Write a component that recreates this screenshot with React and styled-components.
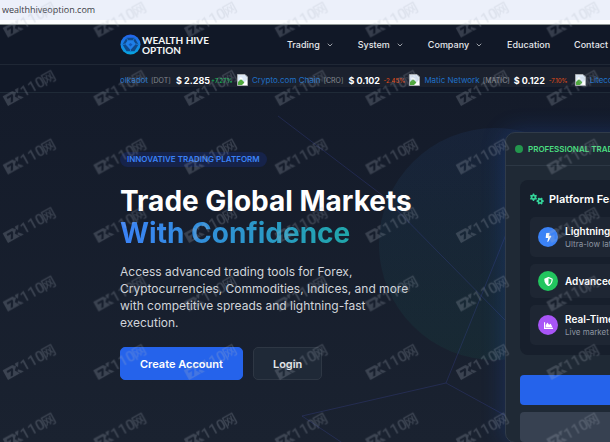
import React from "react";
import styled, { createGlobalStyle, css } from "styled-components";
import { FaBolt, FaChartArea, FaShieldAlt } from "react-icons/fa";
import { FaGears } from "react-icons/fa6";
import { ChevronDown } from "lucide-react";

const GlobalStyle = createGlobalStyle`
  * {
    box-sizing: border-box;
  }

  body {
    margin: 0;
    background: #171f2e;
    color: #fff;
    font-family: Inter, "Liberation Sans", sans-serif;
  }
`;

const Page = styled.div`
  position: relative;
  display: flex;
  flex-direction: column;
  min-height: 100vh;
  overflow: hidden;
`;

const AddressBar = styled.div`
  height: 25px;
  padding-left: 2px;
  background: linear-gradient(#ecf0fa 20px, #fcfdfe 20px);
  border-bottom: 1px solid #8e9693;
  color: #3c4046;
  font-family: "Open Sans", sans-serif;
  font-size: 9px;
  line-height: 20px;
`;

const Header = styled.header`
  height: 40px;
  padding-left: 120px;
  display: flex;
  align-items: center;
  background: #111827;
  border-bottom: 1px solid #1f2735;
`;

const Logo = styled.a`
  width: 167px;
  flex-shrink: 0;
  display: flex;
  align-items: center;
  gap: 1px;
  color: #f4f6f8;
  font-family: Lato, sans-serif;
  font-size: 10px;
  font-weight: 700;
  line-height: 10px;
  text-decoration: none;
`;

const LogoLine = styled.span`
  display: block;
`;

const Menu = styled.nav`
  display: flex;
  align-items: center;
  gap: 24px;
`;

const menuText = css`
  padding: 0;
  border: none;
  background: none;
  color: #e5e7eb;
  font-family: inherit;
  font-size: 9px;
  font-weight: 500;
  line-height: 14px;
  white-space: nowrap;
  cursor: pointer;
`;

const MenuButton = styled.button`
  ${menuText}
  display: flex;
  align-items: center;
  gap: 6px;
`;

const MenuLink = styled.a`
  ${menuText}
  text-decoration: none;
`;

const TickerBar = styled.div`
  height: 28px;
  padding: 2px 0 2px 120px;
  background: #111827;
  border-bottom: 1px solid #1f2a37;
`;

const Ticker = styled.div`
  height: 20px;
  overflow: hidden;
  background: #1b212e;
`;

const Track = styled.div`
  height: 26px;
  display: flex;
  align-items: center;
  gap: 6px;
  width: max-content;
  transform: translateX(-20px);
`;

const Coin = styled.div`
  display: flex;
  align-items: center;
  font-size: 8px;
  white-space: nowrap;
`;

const CoinLink = styled.a`
  margin: 0 3px 0 4px;
  color: #1f70c6;
  text-decoration: none;
`;

const Symbol = styled.span`
  width: ${(props) => props.$width}px;
  color: #858a90;
  font-size: 7px;
`;

const Price = styled.b`
  width: 35px;
  font-size: 9px;
  font-weight: 700;
`;

const Change = styled.span`
  width: 20px;
  color: ${(props) => (props.$up ? "#12b853" : "#dd4a1a")};
  font-size: 6px;
  font-weight: 500;
`;

const Hero = styled.main`
  position: relative;
  flex: 1;
  padding: 39px 0 0 120px;
  display: grid;
  grid-template-columns: 361px 380px;
  gap: 24px;
  align-items: start;
  background: linear-gradient(#141b2a, #1a2230);
`;

const Backdrop = styled.svg`
  position: absolute;
  top: 0;
  left: 0;
`;

const Intro = styled.section`
  position: relative;
  padding-top: 20px;
`;

const Pill = styled.span`
  display: inline-block;
  padding: 0 7px;
  border-radius: 8px;
  background: #16234a;
  color: #3b82f6;
  font-size: 8px;
  font-weight: 600;
  line-height: 15px;
  vertical-align: top;
`;

const Title = styled.h1`
  margin: 13px 0 0;
  font-size: 28px;
  font-weight: 700;
  line-height: 32px;
  white-space: nowrap;
`;

const Accent = styled.span`
  display: block;
  width: max-content;
  background: linear-gradient(90deg, #3b82f6, #20a6aa);
  background-clip: text;
  color: transparent;
`;

const Lead = styled.p`
  max-width: 304px;
  margin: 14px 0 0;
  color: #d1d5db;
  font-size: 12px;
  line-height: 17px;
`;

const Actions = styled.div`
  margin-top: 16px;
  display: flex;
  gap: 10px;
`;

const Button = styled.button`
  height: 33px;
  padding: 0 19px;
  border: 1px solid ${(props) => (props.$primary ? "#2563eb" : "#2e3744")};
  border-radius: 5px;
  background: ${(props) => (props.$primary ? "#2563eb" : "#1f2937")};
  color: ${(props) => (props.$primary ? "#fff" : "#e5e7eb")};
  font-family: inherit;
  font-size: 11px;
  font-weight: 600;
  cursor: pointer;
`;

const Card = styled.section`
  position: relative;
  border: 1px solid #303b49;
  border-radius: 10px;
  background: #1f2935;
  box-shadow: 0 0 25px rgba(37, 99, 235, 0.24);
`;

const CardHeader = styled.div`
  height: 33px;
  padding-left: 9px;
  display: flex;
  align-items: center;
  gap: 5px;
  border-bottom: 1px solid #2c3744;
  color: #4ade80;
  font-size: 8px;
  font-weight: 600;
`;

const Dot = styled.span`
  width: 8px;
  height: 8px;
  border-radius: 50%;
  background: #23964d;
`;

const CardBody = styled.div`
  padding: 14px 14px 0;
`;

const Features = styled.div`
  padding: 10px;
  border-radius: 8px;
  background: #171f2c;
`;

const FeaturesTitle = styled.h2`
  margin: 0 0 9px;
  display: flex;
  align-items: center;
  gap: 5px;
  font-size: 11px;
  font-weight: 600;
  line-height: 18px;

  svg {
    color: #34d399;
    font-size: 14px;
  }
`;

const FeatureList = styled.ul`
  margin: 0;
  padding: 0;
  display: grid;
  gap: 7px;
  list-style: none;
`;

const Feature = styled.li`
  padding: 7px 8px;
  display: flex;
  align-items: center;
  gap: 7px;
  border-radius: 5px;
  background: #1e2633;
`;

const FeatureIcon = styled.span`
  width: 20px;
  height: 20px;
  display: flex;
  align-items: center;
  justify-content: center;
  border-radius: 50%;
  background: ${(props) => props.$color};
  font-size: 9px;
`;

const FeatureName = styled.div`
  font-size: 10px;
  font-weight: 600;
  line-height: 14px;
`;

const FeatureNote = styled.div`
  color: #8d95a2;
  font-size: 8px;
  line-height: 12px;
`;

const CardButton = styled.button`
  width: 100%;
  height: 30px;
  margin-top: ${(props) => (props.$primary ? 20 : 7)}px;
  display: block;
  border: none;
  border-radius: 4px;
  background: ${(props) => (props.$primary ? "#2563eb" : "#374151")};
  cursor: pointer;
`;

const Overlay = styled.svg`
  position: absolute;
  top: 0;
  left: 0;
  width: 100%;
  height: 100%;
  pointer-events: none;
`;

const menu = [
  { name: "Trading", open: true },
  { name: "System", open: true },
  { name: "Company", open: true },
  { name: "Education" },
  { name: "Contact" },
];

const coins = [
  { name: "Polkadot", symbol: "DOT", width: 25, price: "2.285", change: "+7.27%" },
  { name: "Crypto.com Chain", symbol: "CRO", width: 25, price: "0.102", change: "-2.45%" },
  { name: "Matic Network", symbol: "MATIC", width: 31, price: "0.122", change: "-7.10%" },
  { name: "Litecoin", symbol: "LTC", width: 25, price: "76.42", change: "-1.12%" },
];

const features = [
  { name: "Lightning Fast", note: "Ultra-low latency execution", color: "#3b82f6", Icon: FaBolt },
  { name: "Advanced Security", color: "#22c55e", Icon: FaShieldAlt },
  { name: "Real-Time Data", note: "Live market data feeds", color: "#a855f7", Icon: FaChartArea },
];

const LogoMark = () => (
  <svg width="21" height="21" viewBox="0 0 21 21" aria-hidden="true">
    <defs>
      <linearGradient id="mark" x1="0" y1="0" x2="0" y2="1">
        <stop offset="0" stopColor="#2563eb" />
        <stop offset="1" stopColor="#06a5e0" />
      </linearGradient>
    </defs>
    <circle cx="10.5" cy="10.5" r="10" fill="url(#mark)" />
    <path d="M6.5 3.8h8l4 6.7-4 6.7h-8l-4-6.7z" fill="#104a8b" />
    <path d="M7.8 6.3h5.4l2.6 3.7-5.3 6L5.200 10z" fill="#1f7fe8" />
    <path
      d="M6.500 3.800l1.300 3M14.500 3.800l-1.300 3M2.500 10.500l2.900-.5M18.500 10.500l-2.900-.5M10.500 15.400v1.800"
      stroke="#1d78d8"
      strokeWidth="1"
    />
    <path d="M8.500 10.500l2-1.500 2 1.500-2 2z" fill="#1559b8" />
  </svg>
);

const BrokenImage = () => (
  <svg width="11" height="12" viewBox="0 0 11 12" aria-hidden="true">
    <path d="M.5.500h7.500l2.500 2.500v8.500H.500z" fill="#dce8f6" stroke="#a9adb0" />
    <path d="M1 11V8l3-3 3 3 1 3z" fill="#4fa83d" />
    <path d="M5 11l5-5v5z" fill="#fff" />
    <path d="M2.500 4.500a1.300 1.300 0 0 1 2.500-.5 1 1 0 0 1 .5 1.500h-3z" fill="#fff" />
  </svg>
);

const Network = () => (
  <Backdrop width="620" height="400" viewBox="0 0 620 400" aria-hidden="true">
    <defs>
      <linearGradient id="orb" x1="0" y1="0" x2="0" y2="1">
        <stop offset="0" stopColor="#3b82f6" stopOpacity="0.07" />
        <stop offset="1" stopColor="#10b981" stopOpacity="0.06" />
      </linearGradient>
    </defs>
    <circle cx="495" cy="151" r="116" fill="url(#orb)" />
    <path
      d="M278 23L382 102 505 227M530 82L446 290 530 336M446 290L302 323 350 355"
      fill="none"
      stroke="#4f5bd5"
      strokeOpacity="0.2"
    />
  </Backdrop>
);

const Watermark = () => (
  <Overlay aria-hidden="true">
    <defs>
      <pattern id="stamp" width="90.6" height="68.5" patternUnits="userSpaceOnUse" y="-25">
        <g transform="translate(8 62.500) rotate(-29)" fill="#aab2be" fillOpacity="0.24">
          <path
            d="M0-11H11L13.500-8 10.500-5 13.500 0H0zM3-8.500v2.200h3.800L3.800-1.500h2.800L9.500-6.500v-2z"
            fillRule="evenodd"
          />
          <path d="M14-11h4l-3 4.500-1.500-2zM14-4.500l4 4.500h-3.500l-2-3z" />
          <text x="18" y="0" fontFamily="Roboto, sans-serif" fontSize="15" fontWeight="500">
            110
          </text>
          <text x="42" y="0" fontFamily="'Noto Sans CJK SC', sans-serif" fontSize="14" fontWeight="500">
            网
          </text>
        </g>
      </pattern>
    </defs>
    <rect width="100%" height="100%" fill="url(#stamp)" />
  </Overlay>
);

const App = () => {
  return (
    <Page>
      <GlobalStyle />
      <AddressBar>wealthhiveoption.com</AddressBar>
      <Header>
        <Logo href="#">
          <LogoMark />
          <span>
            <LogoLine>WEALTH HIVE</LogoLine>
            <LogoLine>OPTION</LogoLine>
          </span>
        </Logo>
        <Menu>
          {menu.map((item) =>
            item.open ? (
              <MenuButton key={item.name}>
                {item.name}
                <ChevronDown size={8} />
              </MenuButton>
            ) : (
              <MenuLink key={item.name} href="#">
                {item.name}
              </MenuLink>
            )
          )}
        </Menu>
      </Header>
      <TickerBar>
        <Ticker>
          <Track>
            {coins.map((coin) => (
              <Coin key={coin.symbol}>
                <BrokenImage />
                <CoinLink href="#">{coin.name}</CoinLink>
                <Symbol $width={coin.width}>[{coin.symbol}]</Symbol>
                <Price>$ {coin.price}</Price>
                <Change $up={coin.change.startsWith("+")}>{coin.change}</Change>
              </Coin>
            ))}
          </Track>
        </Ticker>
      </TickerBar>
      <Hero>
        <Network />
        <Intro>
          <Pill>INNOVATIVE TRADING PLATFORM</Pill>
          <Title>
            Trade Global Markets
            <Accent>With Confidence</Accent>
          </Title>
          <Lead>
            Access advanced trading tools for Forex, Cryptocurrencies, Commodities, Indices, and
            more with competitive spreads and lightning-fast execution.
          </Lead>
          <Actions>
            <Button $primary>Create Account</Button>
            <Button>Login</Button>
          </Actions>
        </Intro>
        <Card>
          <CardHeader>
            <Dot />
            PROFESSIONAL TRADING
          </CardHeader>
          <CardBody>
            <Features>
              <FeaturesTitle>
                <FaGears />
                Platform Features
              </FeaturesTitle>
              <FeatureList>
                {features.map(({ name, note, color, Icon }) => (
                  <Feature key={name}>
                    <FeatureIcon $color={color}>
                      <Icon />
                    </FeatureIcon>
                    <div>
                      <FeatureName>{name}</FeatureName>
                      {note && <FeatureNote>{note}</FeatureNote>}
                    </div>
                  </Feature>
                ))}
              </FeatureList>
            </Features>
            <CardButton $primary aria-label="Create account" />
            <CardButton aria-label="Login" />
          </CardBody>
        </Card>
      </Hero>
      <Watermark />
    </Page>
  );
};

export default App;
